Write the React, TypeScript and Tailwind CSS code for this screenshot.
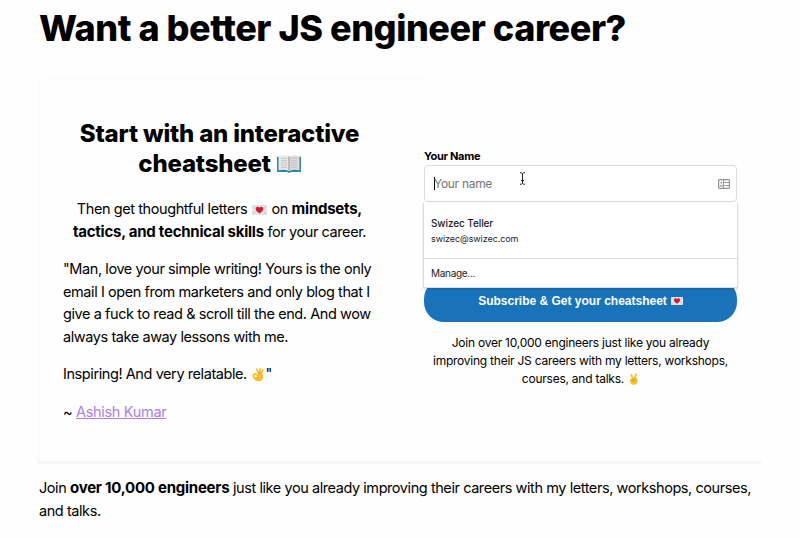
import React from "react";

function Book() {
  return (
    <svg className="ml-px inline-block h-[18px] w-[24px] align-[-1px]" viewBox="0 0 24 20" preserveAspectRatio="none">
      <path d="M0 2h24v17H14l-2 1-2-1H0z" fill="#2f83b0" />
      <path d="M1.500 1Q8-.5 12 2v16Q8 15.500 1.500 17z" fill="#e8e7e5" />
      <path d="M22.500 1Q16-.5 12 2v16q4-2.500 10.500-1z" fill="#dcdbd9" />
      <path d="M4 4q3-1 6 0M4 6.500q3-1 6 0M4 9q3-1 6 0M4 11.500q3-1 6 0M4 14q3-1 6 0M14 4q3-1 6 0M14 6.500q3-1 6 0M14 9q3-1 6 0M14 11.500q3-1 6 0M14 14q3-1 6 0" fill="none" stroke="#b3b5b6" strokeWidth=".7" />
      <path d="M12 2v16" stroke="#85888a" strokeWidth=".9" />
    </svg>
  );
}

function Letter({ className }: { className: string }) {
  return (
    <svg className={"inline-block " + className} viewBox="0 0 15 10">
      <rect width="15" height="10" rx=".8" fill="#dfe3ea" />
      <path d="M.5.8 6 5M14.500.8 9 5M.5 9.500 5 5.500M14.500 9.500 10 5.500" stroke="#b8bfcc" strokeWidth=".6" fill="none" />
      <path d="M7.500 8.500C5.300 6.900 3.700 5.500 3.700 3.800 3.700 1.400 6.700 1 7.500 2.900 8.300 1 11.300 1.400 11.300 3.800c0 1.700-1.600 3.100-3.800 4.700z" fill="#e0162b" />
    </svg>
  );
}

function OkHand() {
  return (
    <svg className="mx-px inline-block h-[15px] w-[13px] align-[-3px]" viewBox="0 0 14 15">
      <path d="M5.500 5.200 4.300 2.200Q4 .9 5 .8q.8 0 1.200 1L7.500 4.600 7.600 1.200Q7.700.1 8.600.1t.9 1.100l-.1 3.700 1.300-2.700q.5-.9 1.300-.6.8.4.4 1.400L11 6.500q1.300 2 .8 4.700Q11 14.700 7 14.800q-3.200 0-4.700-2.500Q.2 10 .6 8.500 1.200 6.500 3.300 6q1.700-.2 3.300 1.800z" fill="#fdbf2d" />
      <circle cx="4" cy="9.300" r="1.300" fill="#fff" />
      <path d="M2 10.500q2 2.300 4.300.3M6.300 8l1.200 1.500M7.500 4.600 8 7M9.400 5 9.300 7.200" stroke="#e39a22" strokeWidth=".7" fill="none" />
    </svg>
  );
}

function Victory() {
  return (
    <svg className="ml-[2px] inline-block h-[12px] w-[10px] align-[-2px]" viewBox="0 0 10 13">
      <path d="M2.700 6.500 1.200 2.100Q1 1 1.800.8q.8-.1 1.200.8L4.700 5.400 6.300.9Q6.700 0 7.600.3q.7.300.5 1.200L7.100 5.800q2.200.3 2 2.700-.2 3.800-3.600 4.300Q1.700 13 .8 9.400.2 7.200 1.300 6.700z" fill="#fcc02e" />
      <path d="M1.300 7.200 3.600 7l.5 2M3 9.800Q4 7.500 7.200 8.300M4.700 5.400 5 7M7.100 5.800l-.4 1.400" stroke="#d6921c" strokeWidth=".7" fill="none" />
    </svg>
  );
}

function Strong({ children }: { children: React.ReactNode }) {
  return <b className="text-[15px] tracking-[-0.24px]">{children}</b>;
}

function Testimonial() {
  return (
    <div className="w-[313px] whitespace-nowrap text-[14.5px] leading-[22.5px] tracking-[-0.42px]">
      <h2 className="text-center text-[24px] font-extrabold leading-[30px] tracking-[-0.2px]">
        Start with an interactive<br />
        cheatsheet <Book />
      </h2>
      <p className="mt-[19px] text-center">
        Then get thoughtful letters <Letter className="mx-px h-[10px] w-[15px] align-[-0.5px]" /> on <Strong>mindsets,</Strong><br />
        <Strong>tactics, and technical skills</Strong> for your career.
      </p>
      <p className="mt-[15px]">
        "Man, love your simple writing! Yours is the only<br />
        email I open from marketers and only blog that I<br />
        give a fuck to read &amp; scroll till the end. And wow<br />
        always take away lessons with me.
      </p>
      <p className="mt-[15px]">Inspiring! And very relatable. <OkHand />"</p>
      <p className="mt-[15px] tracking-[-0.32px]">~ <a className="text-[#b07fe6] underline">Ashish Kumar</a></p>
    </div>
  );
}

function Autofill() {
  return (
    <div className="absolute -left-px top-[38px] z-10 h-[85px] w-[315px] border border-t-0 border-[#dedede] bg-white text-[#222] shadow-[0_1px_2px_rgba(0,0,0,0.15)]">
      <div className="h-[56px] border-b border-[#dedede] pl-[7px] pt-[12px]">
        <div className="text-[10px] font-medium leading-4 tracking-[-0.1px]">Swizec Teller</div>
        <div className="text-[9px] leading-4 tracking-[-0.08px]">swizec@swizec.com</div>
      </div>
      <div className="pl-[7px] text-[10px] leading-[28px] tracking-[-0.3px]">Manage...</div>
    </div>
  );
}

function Signup() {
  return (
    <div className="w-[313px] pt-[29px]">
      <div className="mb-px text-[11px] font-bold leading-4 tracking-[-0.3px]">Your Name</div>
      <div className="relative">
        <div className="flex h-[37px] items-center justify-between rounded-[4px] border border-[#dcdcdc] bg-white pl-[9px] pr-[6px]">
          <div className="flex items-center text-[12px] tracking-[-0.3px] text-[#767676]">
            <span className="-mr-px h-[13px] w-px bg-black" />Your name
          </div>
          <svg className="h-[10px] w-[12px]" viewBox="0 0 12 10" fill="none" stroke="#919191">
            <rect x=".6" y=".6" width="10.800" height="8.800" rx="1.200" strokeWidth="1.200" />
            <path d="M5.500 1v8M6 3.500H11M6 6.500H11" strokeWidth=".9" />
            <circle cx="3.300" cy="3.700" r=".9" fill="#919191" stroke="none" />
            <path d="M1.500 7.800q0-2.400 1.800-2.400T5.200 7.800z" fill="#b2b2b2" stroke="none" />
          </svg>
        </div>
        <svg className="absolute left-[95px] top-[7px] h-[13px] w-[7px]" viewBox="0 0 7 13" fill="none" stroke="#222">
          <path d="M1 .7q2 0 2.500 1Q4 .7 6 .7M3.500 1.500v10M1 12.300q2 0 2.500-1 .5 1 2.500 1M2 8.500h3" />
        </svg>
        <Autofill />
      </div>
      <button className="mt-[77px] flex h-[43px] w-full items-center justify-center whitespace-nowrap rounded-[20px] bg-[#1873bb] font-['Liberation_Sans',Arial,sans-serif] text-[12px] font-bold text-white">
        Subscribe &amp; Get your cheatsheet <Letter className="ml-1 h-[8px] w-[12px]" />
      </button>
      <p className="mt-[12px] whitespace-nowrap text-center text-[12px] leading-[18px] tracking-[-0.24px]">
        Join over 10,000 engineers just like you already<br />
        improving their JS careers with my letters, workshops,<br />
        courses, and talks. <Victory />
      </p>
    </div>
  );
}

export default function App() {
  return (
    <main className="h-[538px] w-[800px] overflow-hidden bg-[#fefefe] pl-[39px] pt-[6px] font-['Inter',sans-serif] text-black">
      <h1 className="whitespace-nowrap text-[36px] font-extrabold leading-[45px] tracking-[-0.44px]">Want a better JS engineer career?</h1>
      <div className="ml-[6px] mt-[27px] h-px w-[380px] bg-[#f7f9f9]" />
      <section className="-ml-px flex h-[385px] w-[723px] gap-12 border-b-[3px] border-l border-b-[#f4f5f5] border-l-[#f5f6f6] pl-[24px] pt-[40px]">
        <Testimonial />
        <Signup />
      </section>
      <p className="mt-[13px] whitespace-nowrap text-[14.5px] leading-[22.5px] tracking-[-0.43px]">
        Join <Strong>over 10,000 engineers</Strong> just like you already improving their careers with my letters, workshops, courses,<br />
        and talks.
      </p>
    </main>
  );
}
